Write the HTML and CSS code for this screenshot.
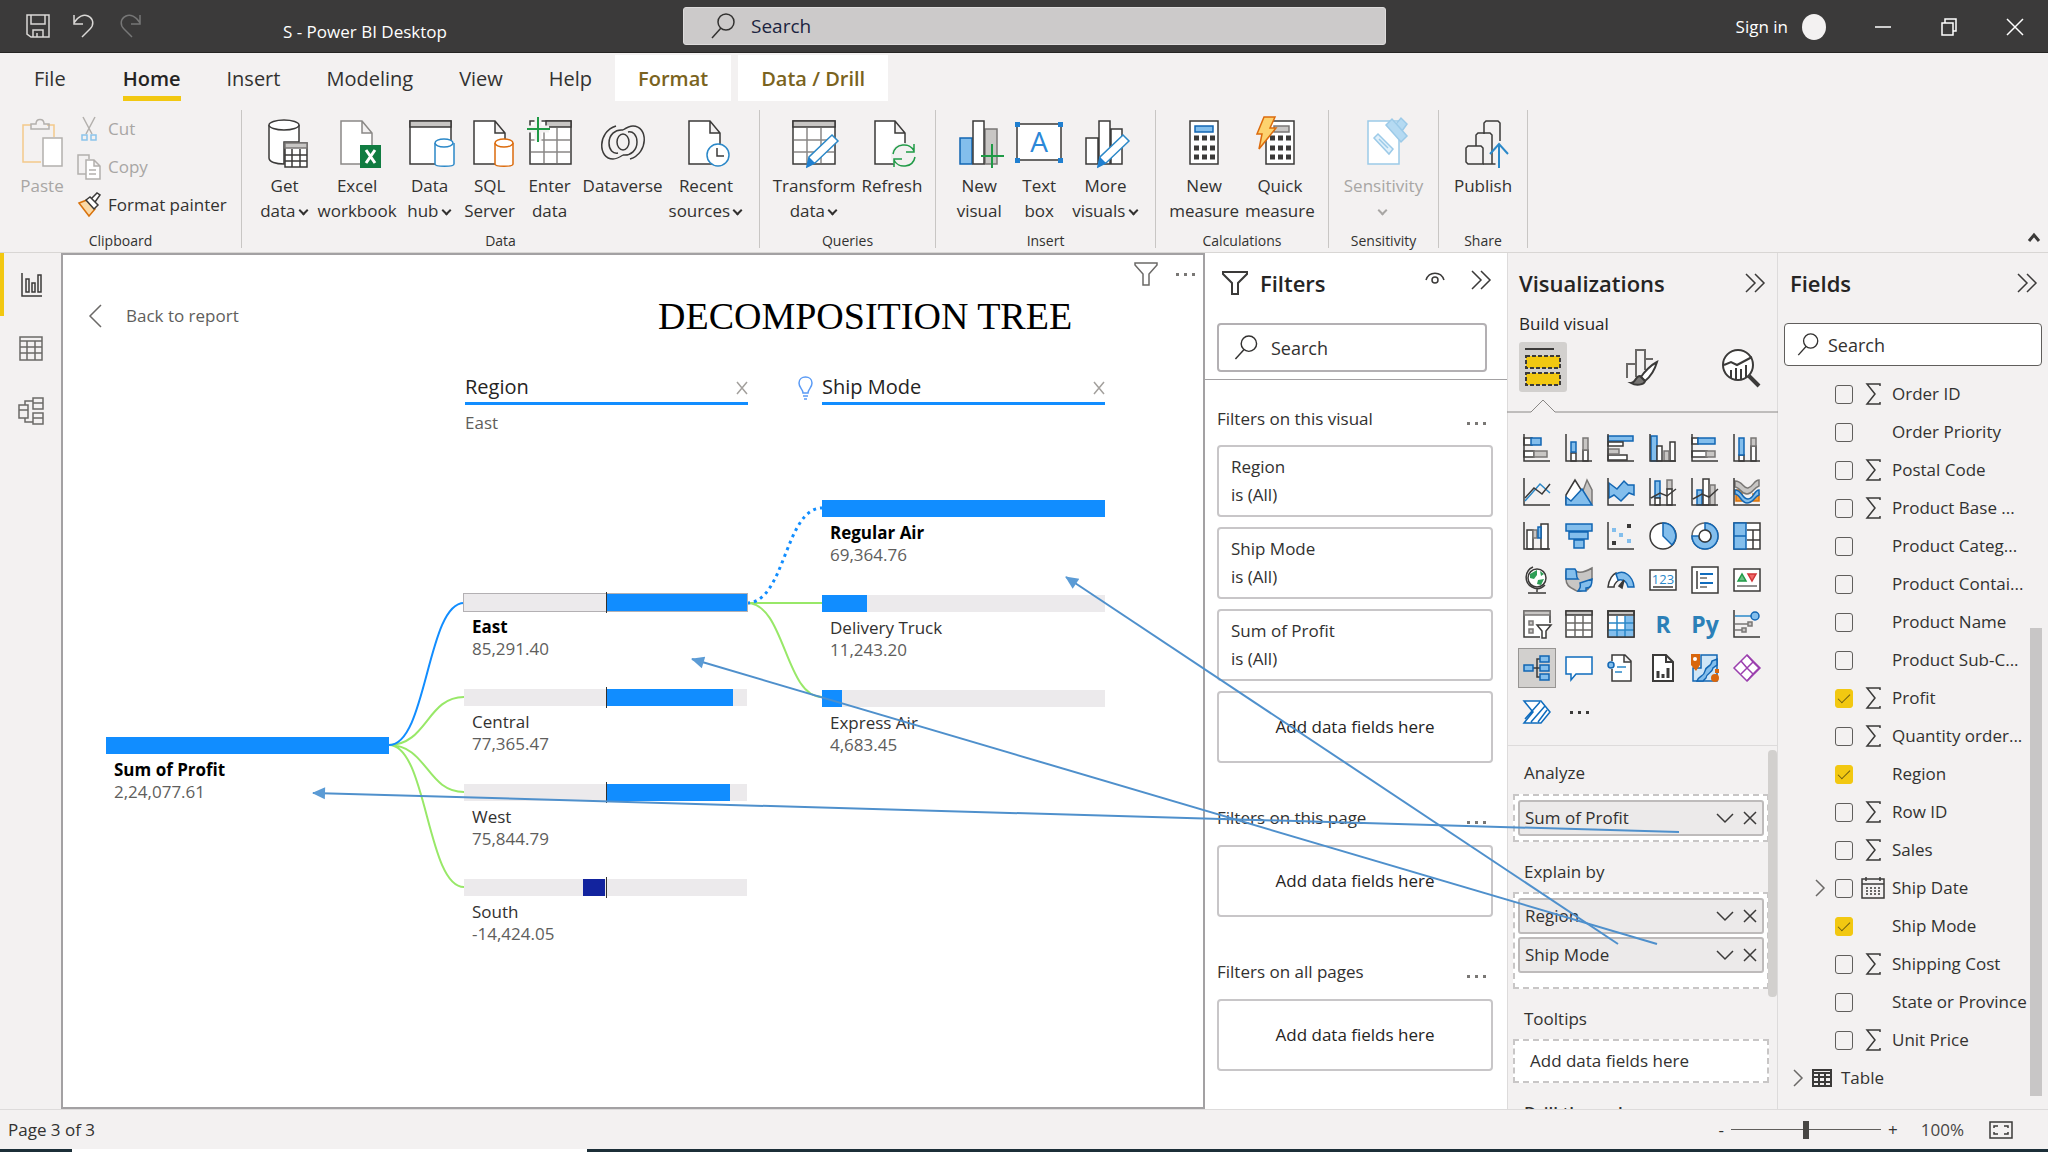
FILE: index.html
```html
<!DOCTYPE html>
<html lang="en">
<head>
  <meta charset="UTF-8">
  <title>S - Power BI Desktop</title>
  <link rel="stylesheet" href="styles.css">
</head>
<body>

  <header class="titlebar">
    <div class="quick">
      <button aria-label="Save"><svg class="line" width="24" height="26" viewBox="0 0 24 26"><path d="M1 2h22v22H5l-4-3zM5 2v9h14V2M7 24v-7h10v7M11 24v-4"/></svg></button>
      <button aria-label="Undo"><svg class="line" width="24" height="26" viewBox="0 0 24 26"><path d="M2 2v9h9M2 10C6 3 12 1 16 3c6 3 6 9 2 13l-8 8"/></svg></button>
      <button class="dim" aria-label="Redo"><svg class="line" width="24" height="26" viewBox="0 0 24 26"><path d="M22 2v9h-9M22 10C18 3 12 1 8 3c-6 3-6 9-2 13l8 8"/></svg></button>
    </div>
    <div class="title">S - Power BI Desktop</div>
    <label class="search top-search">
      <svg class="line" width="24" height="26" viewBox="0 0 24 26"><circle cx="15" cy="9" r="8"/><path d="M10 15L1 25"/></svg>
      <input type="text" placeholder="Search" aria-label="Search">
    </label>
    <div class="window">
      <button class="signin">Sign in <span class="avatar"></span></button>
      <button aria-label="Minimize"><svg class="line" width="18" height="18"><path d="M1 9h16"/></svg></button>
      <button aria-label="Restore"><svg class="line" width="18" height="18"><path d="M2 5h11v12H2zM5 5V1h11v12h-3"/></svg></button>
      <button aria-label="Close"><svg class="line" width="18" height="18"><path d="M1 1l16 16M17 1L1 17"/></svg></button>
    </div>
  </header>

  <nav class="tabs">
    <button class="file">File</button>
    <button class="active"><span>Home</span></button>
    <button>Insert</button>
    <button>Modeling</button>
    <button>View</button>
    <button>Help</button>
    <button class="context">Format</button>
    <button class="context">Data / Drill</button>
  </nav>

  <section class="ribbon">
    <div class="group clipboard">
      <div class="tools">
        <button class="tool off">
          <svg class="ic" width="48" height="52" viewBox="0 0 48 52"><path stroke="#f3c98b" d="M13 9H5v37h18M29 9h7v12"/><path class="gl" d="M13 13V8h5c0-6 8-6 8 0h5v5z"/><path class="gl w" d="M25 22h19v28H25z"/></svg>
          Paste
        </button>
        <div class="stack">
          <button class="off"><svg class="ic" width="24" height="26" viewBox="0 0 24 26"><path class="gl" d="M6 1l9 17M18 1L9 18"/><path stroke="#8cc3ea" d="M5 19h5v5H5zM14 19h5v5h-5z"/></svg>Cut</button>
          <button class="off"><svg class="ic" width="24" height="26" viewBox="0 0 24 26"><path class="gl" d="M9 20H1V1h11v4"/><path class="gl w" d="M9 6h8l6 6v13H9zM17 6v6h6M12 16h7M12 20h7"/></svg>Copy</button>
          <button><svg class="ic" width="24" height="26" viewBox="0 0 24 26"><path fill="#fbd9a6" stroke="#d9730d" d="M2 11l8-3 8 9-6 7z"/><path class="w" d="M9 8l4-3 8 8-4 4zM15 6l5-5 3 2-5 7"/></svg>Format painter</button>
        </div>
      </div>
      <div class="caption">Clipboard</div>
    </div>

    <div class="group data">
      <div class="tools">
        <button class="tool">
          <svg class="ic" width="48" height="52" viewBox="0 0 48 52"><path class="w" d="M8 9v33c0 4 7 6 15 6V26h15V9"/><ellipse class="w" cx="23" cy="9" rx="15" ry="5"/><path class="w" d="M24 27h22v24H24zM24 39h22M24 45h22M31 33v18M39 33v18"/><path class="g" d="M24 27h22v5H24z"/></svg>
          Get<br>data <i class="down"></i>
        </button>
        <button class="tool">
          <svg class="ic" width="48" height="52" viewBox="0 0 48 52"><path class="w gl2" d="M8 5h21l10 12v31H8zM29 5v12h10"/><path fill="#107c41" stroke="none" d="M27 29h21v23H27z"/><path stroke="#fff" stroke-width="3" d="M33 34l9 13M42 34l-9 13"/></svg>
          Excel<br>workbook
        </button>
        <button class="tool">
          <svg class="ic" width="48" height="52" viewBox="0 0 48 52"><path class="w" d="M4 5h41v43H4z"/><path class="g dk" d="M4 5h41v6H4z"/><path class="w bl" d="M29 27v21c0 3 19 3 19 0V27"/><ellipse class="w bl" cx="38" cy="27" rx="9" ry="4"/></svg>
          Data<br>hub <i class="down"></i>
        </button>
        <button class="tool">
          <svg class="ic" width="48" height="52" viewBox="0 0 48 52"><path class="w" d="M8 5h21l10 12v31H8zM29 5v12h10"/><path class="w or" d="M29 27v21c0 3 18 3 18 0V27"/><ellipse class="w or" cx="38" cy="27" rx="9" ry="4"/></svg>
          SQL<br>Server
        </button>
        <button class="tool">
          <svg class="ic" width="48" height="52" viewBox="0 0 48 52"><path class="w" d="M4 5h41v43H4z"/><path class="g dk" d="M20 5h25v6H20z"/><path class="gl2" d="M5 24h39M5 36h39M18 12v35M31 12v35"/><path stroke="#f3f1f1" stroke-width="7" d="M12 1v24M1 13h22"/><path stroke="#1f9a46" stroke-width="2" d="M12 1v25M1 13h23"/></svg>
          Enter<br>data
        </button>
        <button class="tool">
          <svg class="ic" width="48" height="52" viewBox="0 0 48 52"><path d="M17 10C-2 16-1 43 14 43c4 0 7-2 10-4M31 43c19-6 18-33 3-33-4 0-7 2-10 4"/><path d="M24 14c-8-1-14 5-14 13 0 7 4 11 9 10M24 39c8 1 14-5 14-13 0-7-4-11-9-10"/><ellipse cx="24" cy="26" rx="6" ry="8"/></svg>
          Dataverse
        </button>
        <button class="tool">
          <svg class="ic" width="48" height="52" viewBox="0 0 48 52"><path class="w" d="M7 5h21l10 12v31H7zM28 5v12h10"/><circle class="w bl" cx="36" cy="39" r="11"/><path d="M35 32v8h7"/></svg>
          Recent<br>sources <i class="down"></i>
        </button>
      </div>
      <div class="caption">Data</div>
    </div>

    <div class="group queries">
      <div class="tools">
        <button class="tool">
          <svg class="ic" width="48" height="52" viewBox="0 0 48 52"><path class="w" d="M3 5h42v43H3z"/><path class="g dk" d="M3 5h42v6H3z"/><path class="gl2" d="M4 24h40M4 36h40M17 12v35M31 12v35"/><path class="w bl" d="M17 51l2-10 23-22 6 6-23 22z"/><path fill="#1f7fd0" stroke="none" d="M16 52l3-11 6 6z"/></svg>
          Transform<br>data <i class="down"></i>
        </button>
        <button class="tool">
          <svg class="ic" width="48" height="52" viewBox="0 0 48 52"><path class="w" d="M7 5h20l10 12v31H7zM27 5v12h10"/><circle fill="#f3f1f1" stroke="none" cx="36" cy="40" r="13"/><path stroke="#1f9a46" d="M25 38c2-11 17-12 21-3M46 28v8h-8M47 41c-2 11-17 12-21 3M26 51v-8h8"/></svg>
          Refresh
        </button>
      </div>
      <div class="caption">Queries</div>
    </div>

    <div class="group insert">
      <div class="tools">
        <button class="tool">
          <svg class="ic" width="48" height="52" viewBox="0 0 48 52"><path class="b" d="M5 22h12v26H5z"/><path class="g" d="M30 13h12v35H30z"/><path class="w" d="M18 5h11v43H18z"/><path stroke="#1f9a46" stroke-width="2" d="M37 28v24M26 40h23"/></svg>
          New<br>visual
        </button>
        <button class="tool">
          <svg class="ic" width="48" height="52" viewBox="0 0 48 52"><path class="w" d="M2 8h44v36H2z"/><path fill="#1f7fd0" stroke="none" d="M0 6h5v5H0zM43 6h5v5h-5zM0 42h5v5H0zM43 42h5v5h-5z"/><text class="letter" x="24" y="36" text-anchor="middle">A</text></svg>
          Text<br>box
        </button>
        <button class="tool">
          <svg class="ic" width="48" height="52" viewBox="0 0 48 52"><path class="w" d="M5 22h12v26H5zM30 13h11v35H30zM18 5h11v43H18z"/><path class="w bl" d="M17 51l2-10 23-22 6 6-23 22z"/><path fill="#1f7fd0" stroke="none" d="M16 52l3-11 6 6z"/></svg>
          More<br>visuals <i class="down"></i>
        </button>
      </div>
      <div class="caption">Insert</div>
    </div>

    <div class="group calc">
      <div class="tools">
        <button class="tool">
          <svg class="ic" width="48" height="52" viewBox="0 0 48 52"><path class="w" d="M10 5h28v43H10z"/><path class="b" d="M15 10h18v6H15z"/><path stroke-width="5" stroke-dasharray="5 3" d="M14 22h21M14 32h21M14 41h21"/></svg>
          New<br>measure
        </button>
        <button class="tool">
          <svg class="ic" width="48" height="52" viewBox="0 0 48 52"><path class="w" d="M10 5h28v43H10z"/><path class="g" d="M18 10h15v6H18z"/><path stroke-width="5" stroke-dasharray="5 3" d="M14 22h21M14 32h21M14 41h21"/><path fill="#fdd26e" stroke="#dc6b0c" d="M8 1h11l-5 11h6L3 33l3-15H1z"/></svg>
          Quick<br>measure
        </button>
      </div>
      <div class="caption">Calculations</div>
    </div>

    <div class="group sens">
      <div class="tools">
        <button class="tool off">
          <svg class="ic" width="48" height="52" viewBox="0 0 48 52"><g stroke="#9ccae8"><path class="wf" d="M8 5h31v43H8z"/><path fill="#dff0fb" d="M14 22l4-4 15 15-4 5z"/><path fill="#b5daf2" d="M26 9l6-6 15 17-6 6zM36 8l5-6 6 6-5 7"/><path d="M19 23l9 9"/></g></svg>
          Sensitivity<br><i class="down"></i>
        </button>
      </div>
      <div class="caption">Sensitivity</div>
    </div>

    <div class="group share">
      <div class="tools">
        <button class="tool">
          <svg class="ic" width="48" height="52" viewBox="0 0 48 52"><path class="wf2" d="M25 18V7l2-2h12l2 2v41H24M17 30V19l2-2h12l2 2v29"/><path d="M9 30h13l2 2v16H9l-2-2V32z"/><path stroke="#f3f1f1" stroke-width="7" d="M40 25v27"/><path class="bl2" d="M40 52V28M31 38l9-10 9 10"/></svg>
          Publish
        </button>
      </div>
      <div class="caption">Share</div>
    </div>
    <button class="collapse" aria-label="Collapse ribbon"><svg class="ic" width="12" height="10"><path d="M1 9l5-6 5 6" stroke-width="3"/></svg></button>
  </section>

  <main class="main">
    <nav class="rail">
      <button class="on" aria-label="Report"><svg class="ic" width="26" height="28" viewBox="0 0 26 28"><path d="M4 2v23h20M8 8h3v13H8zM14 12h3v9h-3zM20 4h3v17h-3z"/></svg></button>
      <button aria-label="Data"><svg class="ic gy" width="26" height="28" viewBox="0 0 26 28"><path d="M2 3h22v23H2zM2 7h22M2 13h22M2 19h22M9 7v19M17 7v19"/></svg></button>
      <button aria-label="Model"><svg class="ic gy" width="26" height="28" viewBox="0 0 26 28"><path d="M1 8h9v13H1zM1 13h9M15 1h10v11H15zM15 6h10M15 16h10v11H15zM15 21h10M7 8V4h8M7 21v4h8"/></svg></button>
    </nav>

    <section class="canvas">
      <button class="back"><svg class="ic gy" width="14" height="24"><path d="M13 1L2 12l11 11"/></svg>Back to report</button>
      <h1>DECOMPOSITION TREE</h1>
      <div class="visual-menu">
        <button aria-label="Filters"><svg class="ic gy" width="24" height="24"><path d="M1 1h22v2l-8 9v11H9V12L1 3z"/></svg></button>
        <button class="dots" aria-label="More options"><i></i><i></i><i></i></button>
      </div>

      <svg class="links" width="1139" height="852" viewBox="63 255 1139 852">
        <path class="green" d="M389 745C427 745 427 697 464 697M389 745C427 745 427 792 464 792M389 745C427 745 427 887 464 887M747 603H822M747 603C785 603 785 697 822 697"/>
        <path class="blue" d="M389 745C427 745 427 603 464 603"/>
        <path class="blue dotted" d="M747 603C785 603 785 508 822 508"/>
      </svg>

      <div class="head head-region">
        <div class="head-name">Region <button aria-label="Remove Region"><svg class="ic" width="12" height="14"><path d="M1 1l10 12M11 1L1 13"/></svg></button></div>
        <div class="head-pick">East</div>
      </div>
      <div class="head head-ship">
        <svg class="bulb ic" width="15" height="24" viewBox="0 0 15 24"><path d="M5 17c0-4-4-5-4-10 0-8 13-8 13 0 0 5-4 6-4 10zM5 20h5M6 23h3"/></svg>
        <div class="head-name">Ship Mode <button aria-label="Remove Ship Mode"><svg class="ic" width="12" height="14"><path d="M1 1l10 12M11 1L1 13"/></svg></button></div>
      </div>

      <div class="level level-root">
        <div class="node picked"><div class="bar"><span style="width:100%"></span></div><b>Sum of Profit</b><em>2,24,077.61</em></div>
      </div>
      <div class="level level-region">
        <div class="node picked outlined"><div class="bar split"><span style="left:50%;width:50%"></span></div><b>East</b><em>85,291.40</em></div>
        <div class="node"><div class="bar split"><span style="left:50%;width:45%"></span></div><b>Central</b><em>77,365.47</em></div>
        <div class="node"><div class="bar split"><span style="left:50%;width:44%"></span></div><b>West</b><em>75,844.79</em></div>
        <div class="node"><div class="bar split"><span class="neg" style="left:42%;width:8%"></span></div><b>South</b><em>-14,424.05</em></div>
      </div>
      <div class="level level-ship">
        <div class="node picked"><div class="bar"><span style="width:100%"></span></div><b>Regular Air</b><em>69,364.76</em></div>
        <div class="node"><div class="bar"><span style="width:16%"></span></div><b>Delivery Truck</b><em>11,243.20</em></div>
        <div class="node"><div class="bar"><span style="width:7%"></span></div><b>Express Air</b><em>4,683.45</em></div>
      </div>
    </section>

    <aside class="filters">
      <div class="filters-top">
        <div class="pane-title">
          <svg class="ic bold" width="26" height="24"><path d="M1 1h24v2l-9 9v11h-6V12L1 3z"/></svg>
          <h2>Filters</h2>
          <button class="eye" aria-label="Show pane"><svg class="ic" width="20" height="16"><path d="M1 8C4-1 16-1 19 8"/><circle cx="10" cy="8" r="3"/></svg></button>
          <button class="fold" aria-label="Collapse"><svg class="ic" width="20" height="20"><path d="M1 1l9 9-9 9M10 1l9 9-9 9"/></svg></button>
        </div>
        <label class="search boxed">
          <svg class="line" width="24" height="25" viewBox="0 0 24 26"><circle cx="15" cy="9" r="8"/><path d="M10 15L1 25"/></svg>
          <input type="text" placeholder="Search" aria-label="Search filters">
        </label>
      </div>
      <div class="filter-head first">Filters on this visual <button class="dots" aria-label="More"><i></i><i></i><i></i></button></div>
      <div class="cards">
        <div class="card">Region<br>is (All)</div>
        <div class="card">Ship Mode<br>is (All)</div>
        <div class="card">Sum of Profit<br>is (All)</div>
        <div class="card empty">Add data fields here</div>
      </div>
      <div class="filter-head">Filters on this page <button class="dots" aria-label="More"><i></i><i></i><i></i></button></div>
      <div class="card empty">Add data fields here</div>
      <div class="filter-head">Filters on all pages <button class="dots" aria-label="More"><i></i><i></i><i></i></button></div>
      <div class="card empty">Add data fields here</div>
    </aside>

    <aside class="visuals">
      <div class="pane-title">
        <h2>Visualizations</h2>
        <button aria-label="Collapse"><svg class="ic" width="20" height="20"><path d="M1 1l9 9-9 9M10 1l9 9-9 9"/></svg></button>
      </div>
      <div class="build">Build visual</div>
      <div class="modes">
        <button class="on" aria-label="Build visual"><svg class="ic bold" width="38" height="40" viewBox="0 0 38 40"><path d="M1 2h29"/><path fill="#f2c811" stroke-dasharray="4 2" d="M2 9h34v12H2zM2 26h34v12H2z"/></svg></button>
        <button aria-label="Format visual"><svg class="ic bold" width="38" height="40" viewBox="0 0 38 40"><path class="gy" d="M4 31V17h9v13M13 20V3h9v20M22 12h8"/><path class="w" d="M34 15c-6 3-13 10-16 15l4 4c5-4 10-12 12-19z"/><path fill="#797775" d="M17 29c-5 0-4 7-9 7 5 3 13 2 14-2z"/></svg></button>
        <button aria-label="Analytics"><svg class="ic bold" width="38" height="40" viewBox="0 0 38 40"><circle class="w" cx="16" cy="18" r="15"/><path d="M2 18l7-3 6 3 15-8M9 31V23M14 33V21M19 33V22M24 30V18"/><path stroke-width="4" d="M27 29l10 10"/></svg></button>
      </div>
      <svg class="notch" viewBox="0 0 271 14" width="271" height="14"><path d="M0 13H24L36 1L48 13H271"/></svg>

      <div class="gallery">
        <button aria-label="Stacked bar"><svg class="ic"><path class="w" d="M1 4h8v7H1zM1 17h10v6H1z"/><path class="b" d="M8 4h10v7H8z"/><path class="g" d="M11 17h13v6H11z"/><path d="M1 0v27h26"/></svg></button>
        <button aria-label="Stacked column"><svg class="ic"><path class="w" d="M6 19h5v8H6zM18 16h5v11h-5z"/><path class="b" d="M6 8h5v10H6z"/><path class="g" d="M18 4h5v12h-5z"/><path d="M1 0v27h26"/></svg></button>
        <button aria-label="Clustered bar"><svg class="ic"><path class="b" d="M1 2h25v5H1z"/><path class="w" d="M1 8h15v4H1zM1 21h19v5H1z"/><path class="g" d="M1 15h11v5H1z"/><path d="M1 0v27h26"/></svg></button>
        <button aria-label="Clustered column"><svg class="ic"><path class="b" d="M2 2h6v25H2z"/><path class="w" d="M8 12h5v15H8zM21 8h5v19h-5z"/><path class="g" d="M15 17h5v10h-5z"/><path d="M1 0v27h26"/></svg></button>
        <button aria-label="100% stacked bar"><svg class="ic"><path class="w" d="M1 4h6v6H1zM1 17h15v6H1z"/><path class="b" d="M7 4h17v6H7z"/><path class="g" d="M15 17h9v6h-9z"/><path d="M1 0v27h26"/></svg></button>
        <button aria-label="100% stacked column"><svg class="ic"><path class="w" d="M6 21h5v6H6zM18 12h5v15h-5z"/><path class="b" d="M6 4h5v17H6z"/><path class="g" d="M18 4h5v8h-5z"/><path d="M1 0v27h26"/></svg></button>

        <button aria-label="Line"><svg class="ic"><path d="M1 0v27h26"/><path class="bl" d="M2 23L17 6l10 9"/><path d="M2 20l9-10 8 6 8-10"/></svg></button>
        <button aria-label="Area"><svg class="ic"><path class="g" d="M13 26l9-24 5 10v14z"/><path class="w" d="M1 17L10 2l10 16v8H1z"/><path class="b" d="M1 19l5 4L17 11l10 16H1z"/></svg></button>
        <button aria-label="Stacked area"><svg class="ic"><path class="b" d="M2 5l8 6 7-8 4 4h6v10l-5-2-8 8-7-6-5 3z"/><path d="M1 0v27h26"/></svg></button>
        <button aria-label="Line and stacked column"><svg class="ic"><path class="b" d="M6 3h5v17H6z"/><path class="g" d="M18 2h5v9h-5z"/><path class="w" d="M6 20h5v7H6zM18 11h5v16h-5z"/><path d="M1 0v27h26M2 20l9-5 7 3 9-7"/></svg></button>
        <button aria-label="Line and clustered column"><svg class="ic"><path class="b" d="M6 12h5v15H6z"/><path class="w" d="M12 1h6v26h-6z"/><path class="g" d="M19 7h5v20h-5z"/><path d="M1 0v27h26M2 21l9-5 7 3 9-8"/></svg></button>
        <button aria-label="Ribbon"><svg class="ic"><path fill="#f29b38" stroke="#d9730d" d="M3 12h6v11H3zM20 16h6v7h-6z"/><path class="g" d="M2 3c8 0 8 8 13 7s6-8 11-8v6c-6 2-6 8-12 8S7 9 2 9z"/><path class="b" d="M2 12c7 0 7 9 13 9s6-9 11-9v5c-5 2-6 8-12 8S7 16 2 16z"/><path d="M1 0v27h26"/></svg></button>

        <button aria-label="Waterfall"><svg class="ic"><path class="w" d="M4 8h6v19H4zM18 2h7v25h-7z"/><path class="g" d="M10 8h4v8h-4z"/><path class="b" d="M15 5h3v11h-3z"/><path d="M1 0v27h26"/></svg></button>
        <button aria-label="Funnel"><svg class="ic"><path class="b" d="M1 2h26v7H1zM4 10h19v7H4zM9 18h10v8H9z"/></svg></button>
        <button aria-label="Scatter"><svg class="ic"><path d="M1 0v27h26"/><g stroke="none"><path fill="#83beec" d="M5 6h4v4H5zM12 11h4v4h-4zM20 17h4v4h-4z"/><path fill="#3b3a39" d="M20 2h4v4h-4zM5 19h4v4H5z"/></g></svg></button>
        <button aria-label="Pie"><svg class="ic"><circle class="w" cx="14" cy="14" r="13"/><path class="b" d="M14 1v13l9 9c8-9 2-22-9-22z"/></svg></button>
        <button aria-label="Donut"><svg class="ic"><circle class="w gy" cx="14" cy="14" r="13"/><path class="b" d="M14 1a13 13 0 1 1-13 13h7a6 6 0 1 0 6-6z"/><circle class="wf" cx="14" cy="14" r="6"/></svg></button>
        <button aria-label="Treemap"><svg class="ic"><path class="w" d="M1 1h26v26H1zM14 8h13M14 18h13M20 8v19"/><path class="b" d="M1 1h12v13H1zM1 14h12v13H1z"/></svg></button>

        <button aria-label="Map"><svg class="ic"><circle class="w" cx="14" cy="12" r="9"/><path fill="#2f9e57" stroke="none" d="M7 8l7-4v5l-3 4-4-1zM15 14l6-1-3 6-4-1zM17 5l4 3-3 2z"/><path d="M10 1C1 5 1 17 9 21c5 3 10 1 13-2M14 23v3M5 27h18"/></svg></button>
        <button aria-label="Filled map"><svg class="ic"><path class="g" d="M1 5c3 0 6 2 9 0 5 3 12 0 17-3v11c-2 4-1 8-5 11-3-2-8 4-12 0-6-3-9-5-9-11z"/><path class="b" d="M1 3h9c3 3 0 7 3 10H1zM15 17l12-4c0 6-1 9-6 9v3h-8c2-3 3-4 2-8z"/></svg></button>
        <button aria-label="Gauge"><svg class="ic"><path class="w" d="M1 21C2 13 6 8 9 7l3 7c-3 2-5 4-5 7z"/><path class="b" d="M9 8c8-5 17 2 18 13h-6c-1-5-4-8-10-7z"/><path fill="#3b3a39" d="M12 20l5-6-2 8z"/></svg></button>
        <button aria-label="Card"><svg class="ic"><path class="w" d="M1 4h26v20H1zM4 21h20"/><text class="num" x="14" y="18" text-anchor="middle">123</text></svg></button>
        <button aria-label="Multi-row card"><svg class="ic"><path class="w" d="M1 1h26v26H1zM6 5v18"/><path class="bd bold" d="M9 8h13M9 17h13"/><path class="gy" d="M9 12h7M9 21h7"/></svg></button>
        <button aria-label="KPI"><svg class="ic"><path class="w" d="M1 3h26v22H1z"/><path class="gy" d="M4 20h20"/><path fill="#6fc187" stroke="#1f9a46" d="M5 15l4-7 4 7z"/><path fill="#f06a6a" stroke="#d13438" d="M15 8h8l-4 7z"/></svg></button>

        <button aria-label="Slicer"><svg class="ic"><path class="w" d="M27 13V1H1v26h16"/><path class="g" d="M1 1h26v4H1zM6 11h4v4H6zM6 19h4v4H6z"/><path class="w" d="M14 15h14l-5 6v7h-4v-7z"/></svg></button>
        <button aria-label="Table"><svg class="ic"><path class="w" d="M1 1h26v26H1z"/><path class="gy" d="M1 13h26M1 20h26M10 6v21M18 6v21"/><path class="g dk" d="M1 1h26v4H1z"/></svg></button>
        <button aria-label="Matrix"><svg class="ic"><path class="w" d="M1 1h26v26H1z"/><path fill="#83beec" stroke="none" d="M18 6h9v21H1v-7h17z"/><path class="bl" d="M1 13h26M1 20h26M10 6v21M18 6v21"/><path class="g dk" d="M1 1h26v4H1z"/><path d="M1 1h26v26H1z"/></svg></button>
        <button class="code">R</button>
        <button class="code">Py</button>
        <button aria-label="Key influencers"><svg class="ic"><path d="M1 0v27h26"/><path class="bl" d="M2 6h17"/><circle class="b" cx="22" cy="6" r="4"/><path class="g" d="M2 14h13v-2h4v4h-4v-2M2 20h7v-2h4v4H9v-2"/></svg></button>

        <button class="on" aria-label="Decomposition tree"><svg class="ic"><path d="M10 14h8M18 5h-4v18h4"/><path class="b" d="M1 11h9v6H1zM17 2h9v6h-9zM17 11h9v6h-9zM17 20h9v6h-9z"/></svg></button>
        <button aria-label="Q&amp;A"><svg class="ic"><path class="w bd" d="M1 3h26v17H11l-5 6v-6H1z"/></svg></button>
        <button aria-label="Narrative"><svg class="ic"><path class="w" d="M5 7V1h13l6 6v20H5V15M17 1v7h7"/><path class="bl" d="M10 13h9M8 18h7"/><circle class="b" cx="4" cy="11" r="3"/></svg></button>
        <button aria-label="Paginated report"><svg class="ic bold"><path class="w" d="M4 1h13l7 7v19H4zM17 1v7h7"/><path stroke-width="3" d="M9 24v-7M14 24v-4M19 24V14"/></svg></button>
        <button aria-label="ArcGIS map"><svg class="ic"><path fill="#cfe6f7" stroke="#1266b3" d="M2 14v13h24V1H10v13z"/><path fill="#83beec" stroke="#1266b3" d="M6 27c2-6 7-4 8-10s6-3 7-10l5-2v6l-4 3c-1 6-6 4-7 10l-3 3z"/><path fill="#d9660d" stroke="none" d="M0 0h9v11l-4 6-5-6zM24 15h4v4h-4z"/><circle fill="#d9660d" stroke="none" cx="24" cy="24" r="4"/><circle fill="#fff" stroke="none" cx="4" cy="5" r="2"/></svg></button>
        <button aria-label="Power Apps"><svg class="ic"><g stroke="#9b3fae"><path class="wf" d="M14 1l13 13-13 13L1 14z"/><path d="M14 1l6 7-6 6 6 6-6 7M8 7l6 7-6 6M20 8l6 6-6 6-6-6z"/></g></svg></button>

        <button aria-label="Power Automate"><svg class="ic"><path class="w bd" d="M1 3h17l9 11-9 11H1l9-11zM2 21L17 4M8 24L22 8M15 24l9-12"/></svg></button>
        <button class="dots" aria-label="Get more visuals"><i></i><i></i><i></i></button>
      </div>

      <div class="wells">
        <div class="well-name">Analyze</div>
        <div class="well">
          <div class="pill">Sum of Profit <svg class="ic" width="18" height="10"><path d="M1 1l8 8 8-8"/></svg><svg class="ic" width="12" height="12"><path d="M0 0l12 12M12 0L0 12"/></svg></div>
        </div>
        <div class="well-name">Explain by</div>
        <div class="well tall">
          <div class="pill">Region <svg class="ic" width="18" height="10"><path d="M1 1l8 8 8-8"/></svg><svg class="ic" width="12" height="12"><path d="M0 0l12 12M12 0L0 12"/></svg></div>
          <div class="pill">Ship Mode <svg class="ic" width="18" height="10"><path d="M1 1l8 8 8-8"/></svg><svg class="ic" width="12" height="12"><path d="M0 0l12 12M12 0L0 12"/></svg></div>
        </div>
        <div class="well-name">Tooltips</div>
        <div class="well blank">Add data fields here</div>
        <div class="well-name strong">Drill through</div>
        <div class="thumb"></div>
      </div>
    </aside>

    <aside class="fields">
      <div class="pane-title">
        <h2>Fields</h2>
        <button aria-label="Collapse"><svg class="ic" width="20" height="20"><path d="M1 1l9 9-9 9M10 1l9 9-9 9"/></svg></button>
      </div>
      <label class="search boxed">
        <svg class="line" width="22" height="23" viewBox="0 0 24 26"><circle cx="15" cy="9" r="8"/><path d="M10 15L1 25"/></svg>
        <input type="text" placeholder="Search" aria-label="Search fields">
      </label>
      <div class="field-list">
        <label class="field"><input type="checkbox"><i><svg class="ic" width="16" height="22"><path d="M15 3V1H2l8 10L2 21h13v-2"/></svg></i><span>Order ID</span></label>
        <label class="field"><input type="checkbox"><i></i><span>Order Priority</span></label>
        <label class="field"><input type="checkbox"><i><svg class="ic" width="16" height="22"><path d="M15 3V1H2l8 10L2 21h13v-2"/></svg></i><span>Postal Code</span></label>
        <label class="field"><input type="checkbox"><i><svg class="ic" width="16" height="22"><path d="M15 3V1H2l8 10L2 21h13v-2"/></svg></i><span>Product Base ...</span></label>
        <label class="field"><input type="checkbox"><i></i><span>Product Categ...</span></label>
        <label class="field"><input type="checkbox"><i></i><span>Product Contai...</span></label>
        <label class="field"><input type="checkbox"><i></i><span>Product Name</span></label>
        <label class="field"><input type="checkbox"><i></i><span>Product Sub-C...</span></label>
        <label class="field"><input type="checkbox" checked><i><svg class="ic" width="16" height="22"><path d="M15 3V1H2l8 10L2 21h13v-2"/></svg></i><span>Profit</span></label>
        <label class="field"><input type="checkbox"><i><svg class="ic" width="16" height="22"><path d="M15 3V1H2l8 10L2 21h13v-2"/></svg></i><span>Quantity order...</span></label>
        <label class="field"><input type="checkbox" checked><i></i><span>Region</span></label>
        <label class="field"><input type="checkbox"><i><svg class="ic" width="16" height="22"><path d="M15 3V1H2l8 10L2 21h13v-2"/></svg></i><span>Row ID</span></label>
        <label class="field"><input type="checkbox"><i><svg class="ic" width="16" height="22"><path d="M15 3V1H2l8 10L2 21h13v-2"/></svg></i><span>Sales</span></label>
        <label class="field date"><svg class="ic gy" width="11" height="18"><path d="M1 1l8 8-8 8"/></svg><input type="checkbox"><i><svg class="ic" width="24" height="24"><path d="M1 3h22v19H1zM1 8h22M5 1v4M19 1v4"/><path stroke-dasharray="2 2" d="M5 12h15M5 15h15M5 18h15"/></svg></i><span>Ship Date</span></label>
        <label class="field"><input type="checkbox" checked><i></i><span>Ship Mode</span></label>
        <label class="field"><input type="checkbox"><i><svg class="ic" width="16" height="22"><path d="M15 3V1H2l8 10L2 21h13v-2"/></svg></i><span>Shipping Cost</span></label>
        <label class="field"><input type="checkbox"><i></i><span>State or Province</span></label>
        <label class="field"><input type="checkbox"><i><svg class="ic" width="16" height="22"><path d="M15 3V1H2l8 10L2 21h13v-2"/></svg></i><span>Unit Price</span></label>
        <div class="field table"><svg class="ic gy" width="11" height="18"><path d="M1 1l8 8-8 8"/></svg><svg class="ic bold" width="20" height="20"><path d="M1 2h18v16H1zM1 5h18M1 9h18M1 14h18M7 4v14M13 4v14"/></svg><span>Table</span></div>
        <div class="thumb"></div>
      </div>
    </aside>
  </main>

  <footer class="status">
    <span>Page 3 of 3</span>
    <div class="zoom">
      <button aria-label="Zoom out">-</button>
      <input type="range" min="0" max="100" value="50" aria-label="Zoom">
      <button aria-label="Zoom in">+</button>
      <span class="percent">100%</span>
      <button aria-label="Fit to page"><svg class="ic" width="24" height="18"><path d="M1 1h22v16H1zM5 7V5h4M15 5h4v2M19 11v2h-4M9 13H5v-2" /></svg></button>
    </div>
  </footer>
  <div class="taskbar"><span></span></div>

  <!-- callout arrows from the wells to the tree -->
  <svg class="arrows" width="2048" height="1152" viewBox="0 0 2048 1152">
    <defs><marker id="tip" markerWidth="14" markerHeight="14" refX="1" refY="6" orient="auto" markerUnits="userSpaceOnUse"><path d="M13 0L0 6l13 6z"/></marker></defs>
    <path marker-start="url(#tip)" d="M313 793L1679 832"/>
    <path marker-start="url(#tip)" d="M692 659L1657 944"/>
    <path marker-start="url(#tip)" d="M1066 577L1618 944"/>
  </svg>

</body>
</html>
```
FILE: styles.css
```css
* { box-sizing: border-box; }
body {
  margin: 0;
  height: 100vh;
  display: flex;
  flex-direction: column;
  overflow: hidden;
  position: relative;
  background: #f3f1f1;
  color: #323130;
  font-family: "Open Sans", sans-serif;
  font-size: 17px;
  line-height: 24px;
}
button {
  border: none;
  background: none;
  padding: 0;
  font: inherit;
  color: inherit;
}
input { font: inherit; color: inherit; }
h1, h2 { margin: 0; }
svg { display: block; flex: none; }

/* icons */
.line { fill: none; stroke: currentColor; stroke-width: 1.5; }
.ic { fill: none; stroke: #3b3a39; stroke-width: 1.5; overflow: visible; }
.bold { stroke-width: 2; }
.w { fill: #fff; }
.wf { fill: #fff; }
.b { fill: #83beec; stroke: #1266b3; }
.g { fill: #c8c6c4; stroke: #797775; }
.dk { stroke: #3b3a39; }
.gl { stroke: #b3b0ad; }
.gl2 { stroke: #8a8886; }
.gy { stroke: #6b6967; }
.bl, .bl2 { stroke: #2b88c8; }
.bl2 { stroke-width: 2; }
.bd { stroke: #0f6cbd; }
.or { stroke: #dc6b0c; }
.letter { font-size: 28px; fill: #2b88d8; stroke: none; }
.num { font-size: 13px; fill: #2b88c8; stroke: none; }

/* title bar */
.titlebar {
  flex: none;
  height: 53px;
  display: flex;
  align-items: center;
  background: #3b3a3a;
  border-bottom: 1px solid #252423;
  color: #fff;
}
.quick {
  width: 283px;
  padding-left: 26px;
  display: flex;
  gap: 22px;
  color: #dad8d6;
}
.quick .dim { color: #777; }
.title { width: 400px; padding-top: 12px; }
.search { display: flex; align-items: center; }
.search input {
  flex: 1;
  min-width: 0;
  border: none;
  background: none;
  padding: 0;
  outline: none;
}
.search input::placeholder { color: #323130; opacity: 1; }
.top-search {
  width: 703px;
  height: 38px;
  padding-left: 27px;
  gap: 16px;
  background: #cccaca;
  border: 1px solid #dddbdb;
  border-radius: 3px;
  color: #323130;
}
.top-search input { font-size: 19px; }
.top-search input::placeholder { color: #1b2440; }
.window {
  margin-left: auto;
  padding: 2px 24px 0 0;
  display: flex;
  align-items: center;
  gap: 48px;
}
.signin { display: flex; align-items: center; gap: 14px; }
.avatar {
  width: 24px;
  height: 26px;
  border-radius: 50%;
  background: #f3f1f1;
}

/* ribbon */
.tabs {
  flex: none;
  height: 54px;
  padding: 2px 0 6px 11px;
  display: flex;
  font-size: 20px;
}
.tabs button { padding: 2px 23px 0; }
.tabs .file { padding-right: 34px; }
.tabs .active { padding-top: 0; font-weight: 600; color: #252423; }
.tabs .active span {
  display: block;
  height: 46px;
  padding-top: 12px;
  border-bottom: 5px solid #f2c811;
}
.tabs .context {
  margin-right: 7px;
  background: #fff;
  font-weight: 600;
  color: #7a6320;
}
.ribbon {
  flex: none;
  height: 146px;
  padding: 3px 0 4px;
  display: flex;
  border-bottom: 1px solid #d8d6d4;
}
.group {
  display: flex;
  flex-direction: column;
  border-right: 1px solid #c8c6c4;
}
.clipboard { width: 242px; }
.data { width: 518px; }
.queries { width: 176px; }
.insert { width: 220px; }
.calc { width: 173px; }
.sens { width: 110px; }
.share { width: 89px; }
.tools {
  flex: 1;
  padding-top: 6px;
  display: flex;
  justify-content: center;
}
.tool {
  min-width: 60px;
  padding: 0 3px;
  display: block;
  text-align: center;
  white-space: nowrap;
  align-self: flex-start;
  line-height: 25px;
}
.tool svg { margin: 0 auto 5px; }
.off { color: #a8a6a4; }
.down {
  display: inline-block;
  width: 7px;
  height: 7px;
  margin: 0 2px 3px 0;
  border: solid currentColor;
  border-width: 0 2px 2px 0;
  transform: rotate(45deg);
}
.caption {
  height: 16px;
  font-size: 14px;
  line-height: 18px;
  text-align: center;
}
.clipboard .tools { justify-content: flex-start; padding-left: 12px; }
.stack { display: flex; flex-direction: column; gap: 12px; padding-left: 5px; }
.stack button { display: flex; align-items: center; gap: 7px; height: 26px; }
.collapse { margin: auto 8px 6px auto; }

/* work area */
.main { flex: 1; min-height: 0; display: flex; }
.rail { width: 61px; display: flex; flex-direction: column; }
.rail button {
  height: 63px;
  padding-left: 14px;
  border-left: 4px solid transparent;
}
.rail .on { border-color: #f2c811; }
.canvas {
  flex: 1;
  position: relative;
  background: #fff;
  border: 2px solid #a3a1a3;
}
.back {
  position: absolute;
  left: 25px;
  top: 49px;
  display: flex;
  align-items: center;
  gap: 24px;
  color: #605e5c;
}
.canvas h1 {
  position: absolute;
  left: 595px;
  top: 39px;
  font: 38px/44px "Liberation Serif", serif;
  color: #000;
}
.visual-menu {
  position: absolute;
  right: 8px;
  top: 7px;
  display: flex;
  align-items: center;
  gap: 18px;
}
.dots { display: flex; gap: 5px; justify-content: center; }
.dots i { width: 3px; height: 3px; background: #797775; }
.links { position: absolute; left: 0; top: 0; fill: none; }
.green { stroke: #98e868; stroke-width: 2; }
.blue { stroke: #118dff; stroke-width: 2; }
.dotted { stroke-width: 3; stroke-dasharray: 3 4; }
.head { position: absolute; top: 116px; width: 283px; }
.head-region { left: 402px; }
.head-ship { left: 759px; }
.head-name {
  height: 34px;
  display: flex;
  justify-content: space-between;
  align-items: center;
  border-bottom: 3px solid #118dff;
  font-size: 20px;
  color: #252423;
}
.head-name button { padding-top: 2px; }
.head-name .ic { stroke: #a3a09d; }
.head-pick { padding-top: 6px; color: #605e5c; }
.bulb { position: absolute; left: -24px; top: 5px; stroke: #5b9bf5; }
.level { position: absolute; width: 283px; }
.level-root { left: 43px; top: 482px; }
.level-region { left: 401px; top: 339px; }
.level-ship { left: 759px; top: 245px; }
.node { height: 95px; color: #323130; }
.bar { position: relative; height: 17px; margin-bottom: 5px; background: #eceaec; }
.bar span {
  position: absolute;
  top: 0;
  height: 17px;
  background: #118dff;
}
.bar .neg { background: #12239e; }
.split::after {
  content: "";
  position: absolute;
  left: 50%;
  top: -2px;
  width: 1px;
  height: 21px;
  background: #323130;
}
.outlined .bar { outline: 1px solid #b3b0b3; }
.node b, .node em {
  display: block;
  padding-left: 8px;
  line-height: 22px;
  font-weight: 400;
  font-style: normal;
}
.node em { color: #605e5c; }
.picked b { font-weight: 700; color: #000; }

/* side panes */
.pane-title { display: flex; align-items: center; height: 59px; }
.pane-title h2 { margin-right: auto; font-size: 22px; font-weight: 600; color: #252423; }
.boxed {
  background: #fff;
  border: 2px solid #b3b0b3;
  border-radius: 4px;
}
.filters { width: 302px; padding-left: 12px; background: #fff; }
.filters-top {
  height: 127px;
  margin-left: -12px;
  padding: 0 16px 0 12px;
  border-bottom: 1px solid #a3a1a3;
}
.filters-top .pane-title { gap: 12px; padding-left: 5px; }
.filters-top .eye { margin: 0 14px 6px 0; }
.filters-top .fold { margin-bottom: 6px; }
.filters-top .boxed { width: 270px; height: 49px; margin-top: 11px; padding-left: 15px; gap: 13px; }
.boxed input { font-size: 18px; }
.filter-head {
  height: 82px;
  padding: 43px 21px 0 0;
  display: flex;
  justify-content: space-between;
}
.filter-head.first { height: 65px; padding-top: 27px; }
.filter-head .dots { margin-top: 15px; align-items: flex-start; }
.cards { display: grid; gap: 10px; }
.card {
  width: 276px;
  height: 72px;
  padding: 6px 12px;
  border: 2px solid #c8c6c8;
  border-radius: 4px;
  line-height: 28px;
}
.empty { display: grid; place-items: center; color: #252423; }

.visuals {
  width: 271px;
  display: flex;
  flex-direction: column;
  border: solid #dddbdb;
  border-width: 0 1px;
}
.visuals .pane-title { flex: none; padding: 0 12px 0 11px; }
.build { padding-left: 11px; font-weight: 500; color: #252423; }
.modes { display: flex; justify-content: space-between; padding: 6px 12px 0 11px; }
.modes button { width: 48px; height: 50px; display: grid; place-items: center; }
.modes .on { background: #d2d0ce; border-radius: 3px; }
.notch { margin-top: 7px; margin-left: -1px; fill: none; stroke: #8a8886; }
.gallery {
  display: grid;
  grid-template-columns: repeat(6, 42px);
  grid-auto-rows: 44px;
  padding: 13px 0 11px 8px;
  border-bottom: 1px solid #dddbdb;
}
.gallery button { display: flex; align-items: center; justify-content: center; }
.gallery svg { width: 28px; height: 28px; }
.gallery .on { margin: 3px; background: #d2d0ce; outline: 1px solid #979593; }
.gallery .dots i { background: #3b3a39; }
.gallery .code { font-size: 23px; font-weight: 700; color: #2b80b8; }
.wells {
  flex: 1;
  min-height: 0;
  position: relative;
  overflow: hidden;
  padding: 0 8px 0 5px;
}
.well-name { height: 50px; padding: 18px 11px 0; }
.well-name:first-child { height: 48px; padding-top: 15px; }
.strong { font-weight: 600; }
.well {
  background: #fff;
  border: 2px dashed #c8c6c6;
  padding: 4px 3px;
  display: grid;
  gap: 3px;
}
.tall { height: 97px; align-content: start; }
.blank { height: 44px; padding: 0 15px; align-items: center; }
.pill {
  height: 36px;
  padding: 0 6px 0 5px;
  display: flex;
  align-items: center;
  gap: 10px;
  background: #eceaea;
  border: 2px solid #bebbbb;
  border-radius: 3px;
}
.pill svg:first-of-type { margin-left: auto; }
.wells .thumb {
  position: absolute;
  right: 0;
  top: 4px;
  width: 9px;
  height: 247px;
  border-radius: 4px;
  background: #d2d0ce;
}

.fields { width: 270px; }
.fields .pane-title { padding: 0 11px 0 12px; }
.fields .boxed { margin: 11px 6px 0; height: 43px; padding-left: 12px; gap: 9px; border: 1px solid #605e5c; }
.field-list { position: relative; padding-top: 9px; }
.field {
  height: 38px;
  padding-left: 57px;
  display: flex;
  align-items: center;
  white-space: nowrap;
}
.field input {
  appearance: none;
  width: 18px;
  height: 19px;
  margin: 0;
  border: 1px solid #605e5c;
  border-radius: 3px;
}
.field input:checked { background: #f2c811; border-color: #f2c811; }
.field input:checked::before {
  content: "";
  display: block;
  width: 11px;
  height: 5px;
  margin: 4px 2px;
  border: solid #6b5a10;
  border-width: 0 0 1px 1px;
  transform: rotate(-45deg);
}
.field i {
  width: 39px;
  display: grid;
  place-items: center;
}
.date { padding-left: 37px; }
.date > svg { margin-right: 9px; }
.table { padding-left: 15px; }
.table svg + svg { margin: 0 9px 0 8px; }
.fields .thumb {
  position: absolute;
  right: 6px;
  top: 262px;
  width: 12px;
  height: 468px;
  background: #c8c6c6;
}

/* status bar */
.status {
  flex: none;
  height: 40px;
  padding: 0 35px 0 8px;
  display: flex;
  justify-content: space-between;
  align-items: center;
  border-top: 1px solid #dddbdb;
}
.zoom { display: flex; align-items: center; gap: 7px; }
.zoom input {
  appearance: none;
  width: 150px;
  height: 20px;
  margin: 0;
  background: linear-gradient(#605e5c, #605e5c) center / 100% 1px no-repeat;
}
.zoom input::-webkit-slider-thumb {
  appearance: none;
  width: 6px;
  height: 18px;
  background: #484644;
}
.percent { margin: 0 18px 0 16px; color: #484644; }
.taskbar { flex: none; height: 3px; background: #1c2f38; }
.taskbar span { display: block; width: 515px; height: 3px; margin-left: 72px; background: #fff; }

.arrows {
  position: absolute;
  left: 0;
  top: 0;
  pointer-events: none;
  fill: #5b9bd5;
  stroke: #4f90cc;
  stroke-width: 2;
}
.arrows marker path { fill: #5b9bd5; stroke: none; }
```
